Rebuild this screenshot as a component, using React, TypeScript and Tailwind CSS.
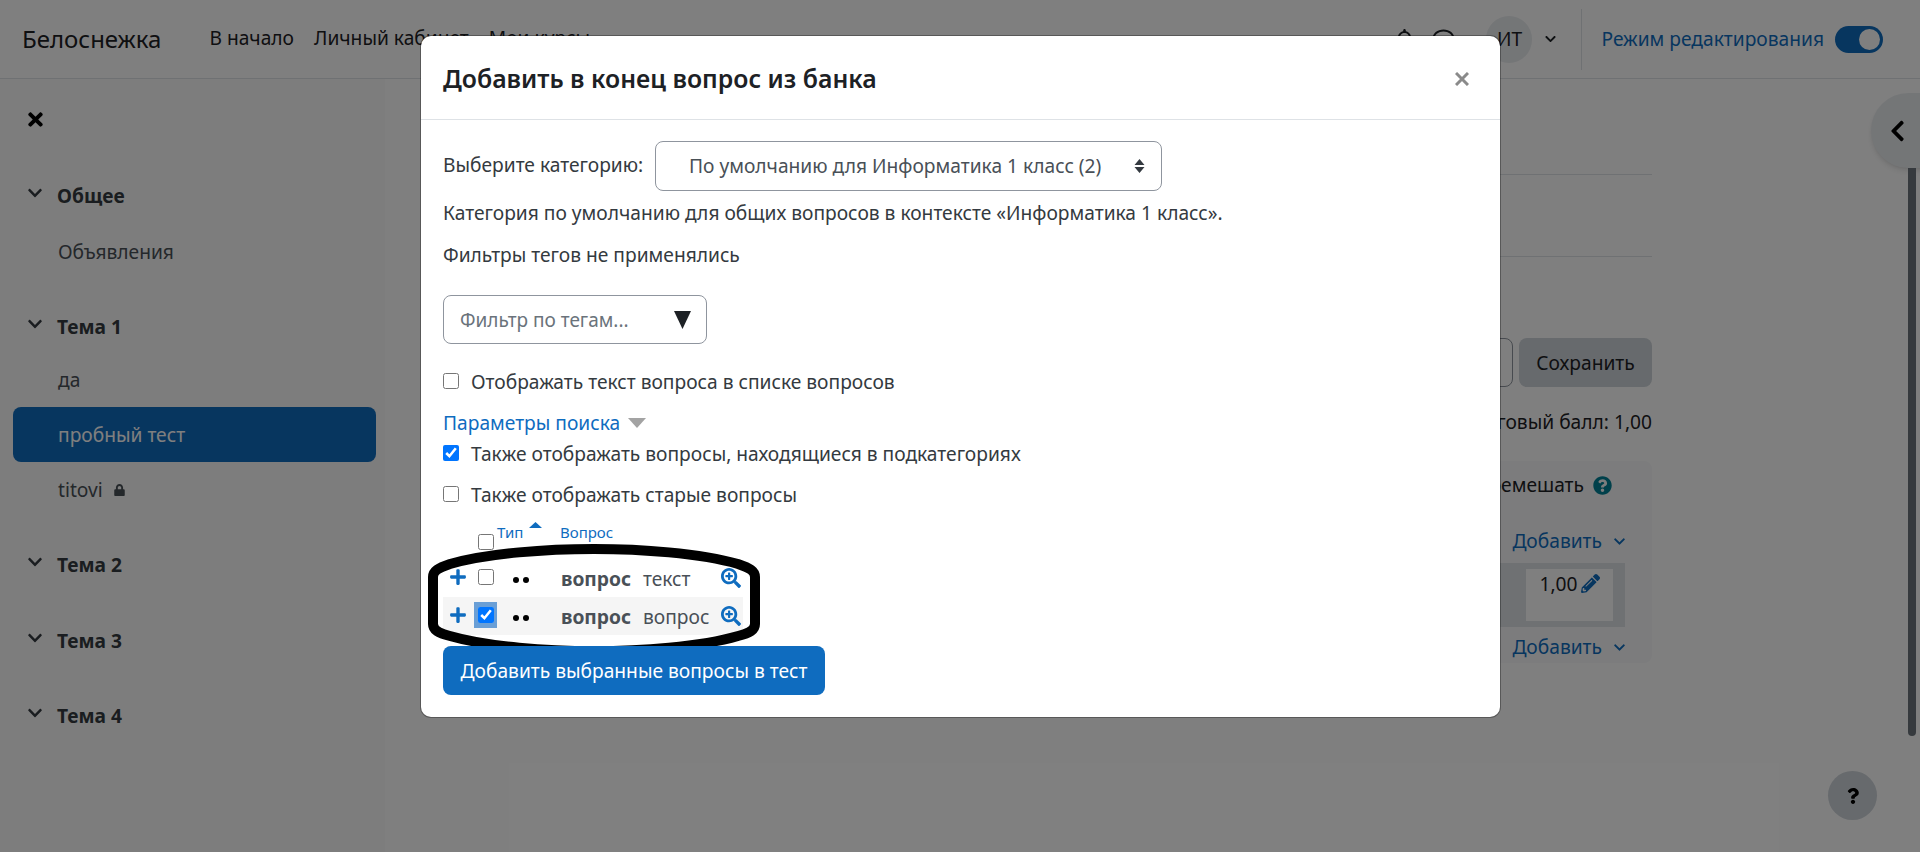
import { FaChevronDown, FaChevronLeft, FaLock, FaPlus, FaQuestion, FaQuestionCircle, FaSearchPlus, FaTimes, FaPencilAlt, FaRegBell, FaRegComment } from "react-icons/fa";

const SECTIONS = [
  { name: "Общее", mt: "mt-0", listMt: "mt-[14px]", items: ["Объявления"] },
  { name: "Тема 1", mt: "mt-[34px]", listMt: "mt-[11px]", items: ["да", "пробный тест", "titovi"] },
  { name: "Тема 2", mt: "mt-[34px]", listMt: "", items: [] },
  { name: "Тема 3", mt: "mt-[48px]", listMt: "", items: [] },
  { name: "Тема 4", mt: "mt-[47px]", listMt: "", items: [] },
];

function Sidebar() {
  return (
    <aside className="w-[385px] shrink-0 bg-[#fafafa] pt-[30px]">
      <FaTimes className="ml-[28px] h-[21px] w-[15px] text-black" />
      <div className="mt-[52px]">
        {SECTIONS.map((s) => (
          <div key={s.name} className={s.mt}>
            <div className="flex h-[28px] items-center font-bold text-[#343a40]">
              <FaChevronDown className="mb-[6px] ml-[28px] h-[16px] w-[14px]" />
              <span className="ml-[15px]">{s.name}</span>
            </div>
            {s.items.length > 0 && (
              <ul className={`${s.listMt} ml-[13px] w-[363px]`}>
                {s.items.map((item) => (
                  <li
                    key={item}
                    className={
                      item === "пробный тест"
                        ? "flex h-[55px] items-center rounded-[8px] bg-[#0f6cbf] pl-[45px] text-white"
                        : "flex h-[55px] items-center pl-[45px] text-[#495057]"
                    }
                  >
                    {item}
                    {item === "titovi" && <FaLock className="ml-[11px] h-[12px] w-[11px] text-[#495057]" />}
                  </li>
                ))}
              </ul>
            )}
          </div>
        ))}
      </div>
    </aside>
  );
}

function Header() {
  return (
    <header className="flex h-[79px] items-center border-b border-[#dee2e6] bg-white pl-[22px] text-[#1d2125]">
      <span className="text-[24px]">Белоснежка</span>
      <nav className="ml-[48px] flex gap-[20px] pb-[2px]">
        <span>В начало</span>
        <span>Личный кабинет</span>
        <span>Мои курсы</span>
      </nav>
      <div className="ml-auto flex items-center pr-[37px]">
        <FaRegBell className="h-[21px] w-[19px]" />
        <FaRegComment className="ml-[18px] h-[22px] w-[23px]" />
        <div className="ml-[31px] flex h-[47px] w-[46px] items-center justify-center rounded-full bg-[#e9ecef]">ИТ</div>
        <FaChevronDown className="ml-[13px] h-[12px] w-[11px]" />
        <div className="ml-[25px] mr-[19px] h-[61px] w-px bg-[#dee2e6]" />
        <span className="text-[#0f6cbf]">Режим редактирования</span>
        <div className="ml-[11px] flex h-[27px] w-[48px] items-center justify-end rounded-full bg-[#0f6cbf] pr-[3px]">
          <div className="h-[21px] w-[21px] rounded-full bg-white" />
        </div>
      </div>
    </header>
  );
}

function AddLink() {
  return (
    <div className="flex items-center justify-end gap-[12px] text-[#0f6cbf]">
      Добавить <FaChevronDown className="h-[13px] w-[11px]" />
    </div>
  );
}

function Behind() {
  return (
    <main className="relative flex-1 bg-white pl-[60px] pr-[268px] text-[#1d2125]">
      <div className="mt-[95px] h-px bg-[#dee2e6]" />
      <div className="mt-[81px] h-px bg-[#dee2e6]" />
      <div className="mt-[81px] flex justify-end gap-[6px]">
        <div className="h-[49px] w-[120px] rounded-[8px] border border-[#8f959e]" />
        <div className="flex h-[49px] w-[133px] items-center justify-center rounded-[8px] bg-[#ced4da]">Сохранить</div>
      </div>
      <div className="mt-[23px] text-right">Итоговый балл: 1,00</div>
      <div className="mt-[27px] h-[202px] rounded-[8px] bg-[#f8f9fa] pr-[27px] pt-[12px]">
        <div className="flex items-center justify-end gap-[9px] pr-[13px]">
          <span>Перемешать</span>
          <FaQuestionCircle className="h-[19px] w-[19px] text-[#008196]" />
        </div>
        <div className="mt-[32px]"><AddLink /></div>
        <div className="mt-[10px] flex h-[64px] justify-end bg-[#dee2e6] pr-[12px] pt-[6px]">
          <div className="flex h-[52px] w-[87px] items-start justify-center gap-[3px] bg-white pt-[3px]">
            1,00 <FaPencilAlt className="mt-[2px] h-[19px] w-[19px] text-[#0f6cbf]" />
          </div>
        </div>
        <div className="mt-[8px]"><AddLink /></div>
      </div>
      <div className="absolute right-[-19px] top-[14px] flex h-[75px] w-[68px] items-center rounded-l-full bg-[#e9ecef] pl-[19px] shadow-md">
        <FaChevronLeft className="h-[24px] w-[15px] text-black" />
      </div>
      <div className="absolute right-[4px] top-[89px] h-[568px] w-[8px] rounded-b-full bg-[#6c757d]" />
      <div className="absolute right-[43px] top-[692px] flex h-[49px] w-[49px] items-center justify-center rounded-full bg-[#ced4da]">
        <FaQuestion className="h-[16px] w-[12px] text-black" />
      </div>
    </main>
  );
}

function Option({ label, checked, className }: { label: string; checked?: boolean; className: string }) {
  return (
    <label className={`flex items-center gap-[12px] ${className}`}>
      <input type="checkbox" defaultChecked={checked} className="mb-[3px] h-[16px] w-[16px]" />
      {label}
    </label>
  );
}

function QuestionRow({ text, checked }: { text: string; checked?: boolean }) {
  return (
    <div className={checked ? "flex h-[38px] w-[300px] items-center bg-[#f5f5f5]" : "flex h-[38px] w-[300px] items-center"}>
      <FaPlus className="mb-[2px] ml-[6px] h-[18px] w-[18px] text-[#0f6cbf]" />
      <div className={checked ? "mb-[2px] ml-[7px] flex h-[26px] w-[23px] items-center justify-center bg-[#6a9fd6]" : "mb-[3px] ml-[7px] flex h-[26px] w-[23px] items-center justify-center"}>
        <input type="checkbox" defaultChecked={checked} className="h-[16px] w-[16px]" />
      </div>
      <span className="ml-[16px] flex w-[48px] gap-[4px] pt-[4px]">
        <span className="h-[6px] w-[6px] rounded-full bg-black" />
        <span className="h-[6px] w-[6px] rounded-full bg-black" />
      </span>
      <b className="pt-[1px] font-bold text-[#495057]">вопрос</b>
      <span className="ml-[12px] pt-[1px] text-[#495057]">{text}</span>
      <FaSearchPlus className="ml-auto mr-[2px] h-[20px] w-[20px] text-[#0f6cbf]" />
    </div>
  );
}

function Modal() {
  return (
    <div className="absolute left-[421px] top-[36px] h-[681px] w-[1079px] rounded-[10px] bg-white text-[#343a40] ring-1 ring-black/30">
      <div className="flex h-[84px] items-center justify-between border-b border-[#dee2e6] pl-[22px] pr-[31px] pt-[1px]">
        <h5 className="text-[24.8px] font-semibold text-[#1d2125]">Добавить в конец вопрос из банка</h5>
        <svg width="14" height="14" viewBox="0 0 14 14" className="mt-[1px]">
          <path d="M1 1 13 13M13 1 1 13" stroke="#8a8a8a" strokeWidth="3" />
        </svg>
      </div>
      <div className="px-[22px]">
        <div className="mt-[21px] flex items-center">
          <span className="mb-[2px] w-[212px] shrink-0">Выберите категорию:</span>
          <div className="flex h-[50px] w-[507px] items-center justify-between rounded-[8px] border border-[#8f959e] pl-[33px] pr-[16px] text-[#495057]">
            По умолчанию для Информатика 1 класс (2)
            <svg width="11" height="14" viewBox="0 0 11 14" className="text-[#343a40]">
              <path d="M5.500 0 10.500 6H.5zM5.500 14 .5 8h10z" fill="currentColor" />
            </svg>
          </div>
        </div>
        <p className="mt-[10px]">Категория по умолчанию для общих вопросов в контексте «Информатика 1 класс».</p>
        <p className="mt-[18px]">Фильтры тегов не применялись</p>
        <div className="mt-[28px] flex h-[49px] w-[264px] items-center justify-between rounded-[8px] border border-[#8f959e] pl-[16px] pr-[15px] text-[19px] text-[#6a737b]">
          Фильтр по тегам...
          <svg width="17" height="18" viewBox="0 0 17 18" className="text-[#1d2125]">
            <path d="M0 0h17L8.500 18z" fill="currentColor" />
          </svg>
        </div>
        <Option label="Отображать текст вопроса в списке вопросов" className="mt-[26px]" />
        <div className="mt-[17px] flex items-center gap-[8px] text-[#0f6cbf]">
          Параметры поиска
          <svg width="18" height="10" viewBox="0 0 18 10"><path d="M0 0h18L9 10z" fill="#a3a3a3" /></svg>
        </div>
        <Option label="Также отображать вопросы, находящиеся в подкатегориях" checked className="mt-[7px]" />
        <Option label="Также отображать старые вопросы" className="mt-[17px]" />
        <div className="relative mt-[15px] h-[37px] text-[15px] text-[#0f6cbf]">
          <input type="checkbox" className="absolute left-[35px] top-[12px] h-[16px] w-[16px]" />
          <span className="absolute left-[54px] top-[-2px]">Тип</span>
          <svg width="13" height="6" viewBox="0 0 13 6" className="absolute left-[86px] top-0"><path d="M6.500 0 13 6H0z" fill="#0f6cbf" /></svg>
          <span className="absolute left-[117px] top-[-2px]">Вопрос</span>
        </div>
        <div className="relative">
          <QuestionRow text="текст" />
          <QuestionRow text="вопрос" checked />
          <svg width="332" height="112" viewBox="0 0 332 112" fill="none" className="absolute left-[-15px] top-[-15px]">
            <path d="M5 33C5 27 10 24 22 20C60 9 120 5 166 5S272 9 310 20C322 24 327 27 327 33V80C327 86 322 89 310 92C272 103 212 107 166 107S60 103 22 92C10 89 5 86 5 80Z" stroke="#000" strokeWidth="10" />
          </svg>
        </div>
        <button className="relative mt-[11px] flex h-[49px] w-[382px] items-center justify-center rounded-[8px] bg-[#0f6cbf] text-white">
          Добавить выбранные вопросы в тест
        </button>
      </div>
    </div>
  );
}

export default function App() {
  return (
    <div className="relative h-[852px] overflow-hidden text-[19.2px] leading-[24px]" style={{ fontFamily: '"Noto Sans", sans-serif' }}>
      <Header />
      <div className="flex h-[773px]">
        <Sidebar />
        <Behind />
      </div>
      <div className="absolute inset-0 bg-black/50" />
      <Modal />
    </div>
  );
}
